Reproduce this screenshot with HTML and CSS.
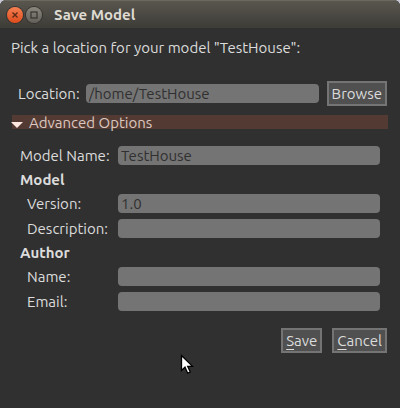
FILE: index.html
```html
<!DOCTYPE html>
<html lang="en">
<head>
<meta charset="utf-8">
<title>Save Model</title>
<link rel="stylesheet" href="styles.css">
</head>
<body>
<header class="titlebar">
  <button class="control close" type="button" aria-label="Close"><svg width="16" height="16" viewBox="0 0 16 16"><path d="M5.500 5.500l5 5M10.500 5.500l-5 5" fill="none" stroke="#5b2a18" stroke-width="1.400"/></svg></button>
  <button class="control" type="button" aria-label="Maximize"><svg width="16" height="16" viewBox="0 0 16 16"><rect x="5" y="5" width="6" height="6" fill="none" stroke="#35342f" stroke-width="1.200"/></svg></button>
  <h1 class="title">Save Model</h1>
</header>
<main>
  <form class="dialog">
    <p class="prompt">Pick a location for your model "TestHouse":</p>
    <div class="location">
      <label for="location">Location:</label>
      <input class="field" id="location" type="text" value="/home/TestHouse">
      <button class="button" type="button">Browse</button>
    </div>
    <button class="expander" type="button" aria-expanded="true"><svg width="12" height="6" viewBox="0 0 12 6"><path d="M0 0h12L6 6z" fill="#ffe9e0"/></svg>Advanced Options</button>
    <div class="options">
      <label for="model-name">Model Name:</label>
      <input class="field" id="model-name" type="text" value="TestHouse">
      <h2 class="group">Model</h2>
      <label class="sub" for="version">Version:</label>
      <input class="field" id="version" type="text" value="1.0">
      <label class="sub" for="description">Description:</label>
      <input class="field" id="description" type="text">
      <h2 class="group">Author</h2>
      <label class="sub" for="name">Name:</label>
      <input class="field" id="name" type="text">
      <label class="sub" for="email">Email:</label>
      <input class="field" id="email" type="text">
    </div>
    <div class="actions">
      <button class="button" type="button"><u>S</u>ave</button>
      <button class="button" type="button"><u>C</u>ancel</button>
    </div>
  </form>
</main>
<svg class="pointer" width="14" height="22" viewBox="0 0 14 22" aria-hidden="true"><path d="M1.500 1.500v15l3.500-3.300 2.700 6 2.600-1.200-2.600-5.600h4.800z" fill="#fff" stroke="#000" stroke-width="1.300"/></svg>
</body>
</html>
```
FILE: styles.css
```css
* {
  box-sizing: border-box;
}

html {
  background: #c9c8d6;
}

body {
  margin: 0;
  min-height: 100vh;
  display: flex;
  flex-direction: column;
  overflow: hidden;
  border-radius: 6px 6px 0 0;
  background: #303030;
  color: #dcdcdc;
  font: 15px/19px "Ubuntu", "Open Sans", "Noto Sans", sans-serif;
}

button,
input {
  font: inherit;
  color: inherit;
}

.titlebar {
  display: flex;
  align-items: center;
  gap: 3px;
  height: 28px;
  padding: 0 7px;
  background: linear-gradient(#59564e, #3d3c37);
  border-top: 1px solid #6b685f;
}

.control {
  display: flex;
  width: 16px;
  height: 16px;
  padding: 0;
  border: 0;
  border-radius: 50%;
  background: linear-gradient(#8a877e, #62605a);
  box-shadow: 0 0 0 1px #34332f;
}

.close {
  background: linear-gradient(#f58052, #df4b1b);
}

.title {
  margin: 0 0 0 9px;
  font-size: 15px;
  color: #dfdbd2;
}

.dialog {
  padding: 10px 12px;
}

.prompt {
  margin: 0 0 24px -1px;
}

.location {
  display: flex;
  align-items: center;
  margin-left: 6px;
}

.location .field {
  flex: 1;
  margin: 0 8px 0 6px;
}

.location .button {
  margin-right: 1px;
}

.field {
  min-width: 0;
  height: 19px;
  padding: 0 3px;
  border: 0;
  border-radius: 4px;
  background: #747474;
  color: #303030;
}

.button {
  height: 25px;
  padding: 0 3px;
  border: 2px solid #747474;
  background: #505050;
}

.button u {
  text-underline-offset: 3px;
}

.expander {
  display: flex;
  align-items: center;
  gap: 6px;
  width: 100%;
  height: 14px;
  margin-top: 9px;
  padding: 0;
  border: 0;
  background: #533b33;
  color: #dcc8c0;
}

.expander svg {
  margin: 6px 0 0 -1px;
}

.options {
  display: grid;
  grid-template-columns: 92px 1fr;
  gap: 6px;
  margin: 17px 8px;
}

.group {
  grid-column: 1 / -1;
  margin: 0;
  font-size: 15px;
  line-height: 17px;
}

.sub {
  padding-left: 7px;
}

.actions {
  display: flex;
  justify-content: flex-end;
  gap: 10px;
  margin-right: 1px;
}

.pointer {
  position: absolute;
  left: 180px;
  top: 354px;
}
```
